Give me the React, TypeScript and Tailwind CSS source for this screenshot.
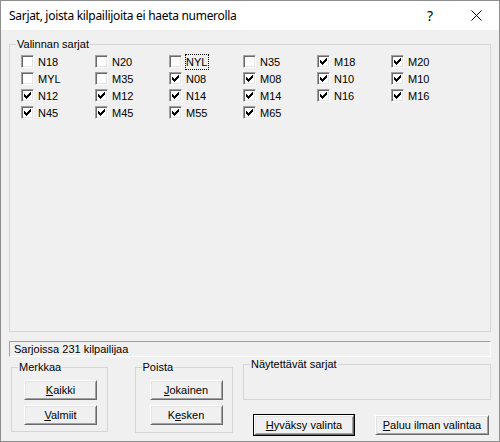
import React from "react";

type Item = { label: string; checked: boolean; focus?: boolean };

const items: Item[] = [
  { label: "N18", checked: false },
  { label: "N20", checked: false },
  { label: "NYL", checked: false, focus: true },
  { label: "N35", checked: false },
  { label: "M18", checked: true },
  { label: "M20", checked: true },
  { label: "MYL", checked: false },
  { label: "M35", checked: false },
  { label: "N08", checked: true },
  { label: "M08", checked: true },
  { label: "N10", checked: true },
  { label: "M10", checked: true },
  { label: "N12", checked: true },
  { label: "M12", checked: true },
  { label: "N14", checked: true },
  { label: "M14", checked: true },
  { label: "N16", checked: true },
  { label: "M16", checked: true },
  { label: "N45", checked: true },
  { label: "M45", checked: true },
  { label: "M55", checked: true },
  { label: "M65", checked: true },
];

function CheckBox({ checked }: { checked: boolean }) {
  return (
    <div className="w-[13px] h-[13px] shrink-0 bg-white border border-t-[#a0a0a0] border-l-[#a0a0a0] border-r-white border-b-white shadow-[inset_1px_1px_0_#696969,inset_-1px_-1px_0_#e3e3e3] relative">
      {checked && (
        <svg
          width="7"
          height="7"
          viewBox="0 0 7 7"
          className="absolute left-[2px] top-[2px]"
          shapeRendering="crispEdges"
        >
          <path
            d="M0 2h1v3H0zM1 3h1v3H1zM2 4h1v3H2zM3 3h1v3H3zM4 2h1v3H4zM5 1h1v3H5zM6 0h1v3H6z"
            fill="#000"
          />
        </svg>
      )}
    </div>
  );
}

function GroupBox({
  title,
  className,
  children,
}: {
  title: string;
  className: string;
  children?: React.ReactNode;
}) {
  return (
    <div className={"relative border border-[#d5d5d5] " + className}>
      <span className="absolute left-[6px] top-[-8px] px-[1px] bg-[#f0f0f0] leading-[14px]">
        {title}
      </span>
      {children}
    </div>
  );
}

function Button({
  children,
  className,
}: {
  children: React.ReactNode;
  className: string;
}) {
  return (
    <div
      className={
        "flex items-center justify-center bg-[#f0f0f0] border border-t-white border-l-white border-r-[#696969] border-b-[#696969] shadow-[inset_1px_1px_0_#e3e3e3,inset_-1px_-1px_0_#a0a0a0] " +
        className
      }
    >
      {children}
    </div>
  );
}

export default function App() {
  return (
    <div className="w-[500px] h-[442px] border border-[#8e8e8e] bg-[#f0f0f0] flex flex-col font-['Liberation_Sans',Arial,sans-serif] text-[11px] text-black overflow-hidden">
      <div className="h-[29px] bg-white flex items-center shrink-0">
        <span className="pl-[8px] font-['Noto_Sans',sans-serif] text-[12px] tracking-[-0.3px] flex-1">
          Sarjat, joista kilpailijoita ei haeta numerolla
        </span>
        <div className="w-[46px] h-full flex items-center justify-center font-['Noto_Sans',sans-serif] text-[14px]">
          ?
        </div>
        <div className="w-[46px] h-full flex items-center justify-center">
          <svg width="11" height="11" viewBox="0 0 11 11">
            <path d="M0.5 0.5L10.5 10.5M10.5 0.5L0.5 10.5" stroke="#000" strokeWidth="1" />
          </svg>
        </div>
      </div>

      <div className="flex flex-col px-[8px]">
        <GroupBox title="Valinnan sarjat" className="mt-[14px] w-[482px] h-[288px]">
          <div className="grid grid-cols-[repeat(6,74px)] auto-rows-[17px] pl-[11px] pt-[8px]">
            {items.map((it) => (
              <div key={it.label} className="flex items-center">
                <CheckBox checked={it.checked} />
                <span
                  className={
                    "ml-[3px] pr-[1px] leading-[14px] border " +
                    (it.focus ? "border-dotted border-black" : "border-transparent")
                  }
                >
                  {it.label}
                </span>
              </div>
            ))}
          </div>
        </GroupBox>

        <div className="mt-[9px] w-[482px] h-[16px] border border-t-[#a0a0a0] border-l-[#a0a0a0] border-r-white border-b-white flex items-center pl-[4px] leading-[14px]">
          Sarjoissa 231 kilpailijaa
        </div>

        <div className="flex items-start">
          <GroupBox title="Merkkaa" className="mt-[10px] ml-[2px] w-[97px] h-[65px]">
            <div className="flex flex-col gap-[5px] pl-[12px] pt-[12px]">
              <Button className="w-[73px] h-[20px]">
                <span>
                  <u>K</u>aikki
                </span>
              </Button>
              <Button className="w-[73px] h-[20px]">
                <span>
                  <u>V</u>almiit
                </span>
              </Button>
            </div>
          </GroupBox>

          <GroupBox title="Poista" className="mt-[10px] ml-[27px] w-[99px] h-[66px]">
            <div className="flex flex-col gap-[5px] pl-[14px] pt-[12px]">
              <Button className="w-[73px] h-[20px]">
                <span>
                  <u>J</u>okainen
                </span>
              </Button>
              <Button className="w-[73px] h-[20px]">
                <span>
                  K<u>e</u>sken
                </span>
              </Button>
            </div>
          </GroupBox>

          <div className="ml-[10px] mt-[7px] flex flex-col">
            <GroupBox title="Näytettävät sarjat" className="w-[248px] h-[36px]" />
            <div className="flex items-start mt-[14px]">
              <div className="ml-[10px] border border-black">
                <Button className="w-[100px] h-[20px]">
                  <span>
                    <u>H</u>yväksy valinta
                  </span>
                </Button>
              </div>
              <Button className="ml-[20px] mt-[1px] w-[114px] h-[20px]">
                <span>
                  <u>P</u>aluu ilman valintaa
                </span>
              </Button>
            </div>
          </div>
        </div>
      </div>
    </div>
  );
}
